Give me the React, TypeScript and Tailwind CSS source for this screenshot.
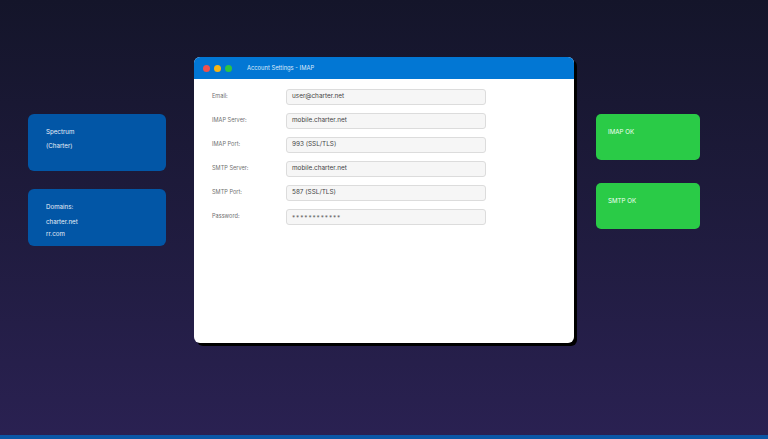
import React from "react"

// ---------------------------------------------------------------------------
// Data
// ---------------------------------------------------------------------------

const fields: { label: string; value: string; secret?: boolean }[] = [
  { label: "Email:", value: "user@charter.net" },
  { label: "IMAP Server:", value: "mobile.charter.net" },
  { label: "IMAP Port:", value: "993 (SSL/TLS)" },
  { label: "SMTP Server:", value: "mobile.charter.net" },
  { label: "SMTP Port:", value: "587 (SSL/TLS)" },
  { label: "Password:", value: "************", secret: true },
]

// ---------------------------------------------------------------------------
// Pieces
// ---------------------------------------------------------------------------

function InfoCard({ lines, gapAfterFirst }: { lines: string[]; gapAfterFirst?: boolean }) {
  return (
    <div className="h-[57px] rounded-[6px] bg-[#0256a6] pl-[18px] pt-[14px] text-[6.2px] leading-[8px] text-[#e8eef8]">
      {lines.map((line, i) => (
        <div key={line} className={i === 0 ? "" : i === 1 ? (gapAfterFirst ? "mt-[7px]" : "mt-[6px]") : "mt-[4px]"}>
          {line}
        </div>
      ))}
    </div>
  )
}

function StatusCard({ label, className }: { label: string; className?: string }) {
  return (
    <div
      className={`h-[46px] rounded-[5px] bg-[#2acb47] pl-[12px] pt-[14px] text-[6.2px] leading-[8px] text-[#f0fff2] ${className ?? ""}`}
    >
      {label}
    </div>
  )
}

// ---------------------------------------------------------------------------
// Main Component
// ---------------------------------------------------------------------------
export default function App() {
  return (
    <div
      className="w-[768px] h-[439px] flex flex-col bg-gradient-to-b from-[#14152a] to-[#2a2152] overflow-hidden"
      style={{ fontFamily: "Inter, 'Noto Sans', sans-serif" }}
    >
      <div className="flex-1 flex items-start pl-[28px]">
        {/* Left info cards */}
        <div className="w-[138px] mt-[114px] flex flex-col gap-[18px]">
          <InfoCard lines={["Spectrum", "(Charter)"]} />
          <InfoCard lines={["Domains:", "charter.net", "rr.com"]} gapAfterFirst />
        </div>

        {/* Settings window */}
        <div className="ml-[28px] mt-[57px] w-[380px] h-[286px] rounded-[6px] bg-white overflow-hidden shadow-[3px_3px_0_#000]">
          <div className="h-[22px] bg-[#0277d4] flex items-center pl-[9px]">
            <span className="w-[7px] h-[7px] rounded-full bg-[#f0504c]" />
            <span className="ml-[4px] w-[7px] h-[7px] rounded-full bg-[#f7b515]" />
            <span className="ml-[4px] w-[7px] h-[7px] rounded-full bg-[#2ec443]" />
            <span className="ml-[15px] text-[5.8px] text-[#dbe9fb]">Account Settings - IMAP</span>
          </div>
          <div className="pl-[18px] pt-[10px] flex flex-col gap-[8px]">
            {fields.map((f) => (
              <div key={f.label} className="flex items-center">
                <span className="w-[74px] text-[5.6px] text-[#707070] -mt-[2px]">{f.label}</span>
                <div
                  className={`w-[200px] h-[16px] rounded-[3px] border border-[#dcdcdc] bg-[#f6f6f6] pl-[5px] flex items-center text-[#444] ${
                    f.secret ? "text-[6.4px] tracking-[0.9px] text-[#666] pt-[3px]" : "text-[6.4px]"
                  }`}
                >
                  {f.value}
                </div>
              </div>
            ))}
          </div>
        </div>

        {/* Right status cards */}
        <div className="ml-[22px] mt-[114px] w-[104px] flex flex-col">
          <StatusCard label="IMAP OK" />
          <StatusCard label="SMTP OK" className="mt-[23px]" />
        </div>
      </div>
      <div className="h-[4px] bg-[#0b57a6]" />
    </div>
  )
}
